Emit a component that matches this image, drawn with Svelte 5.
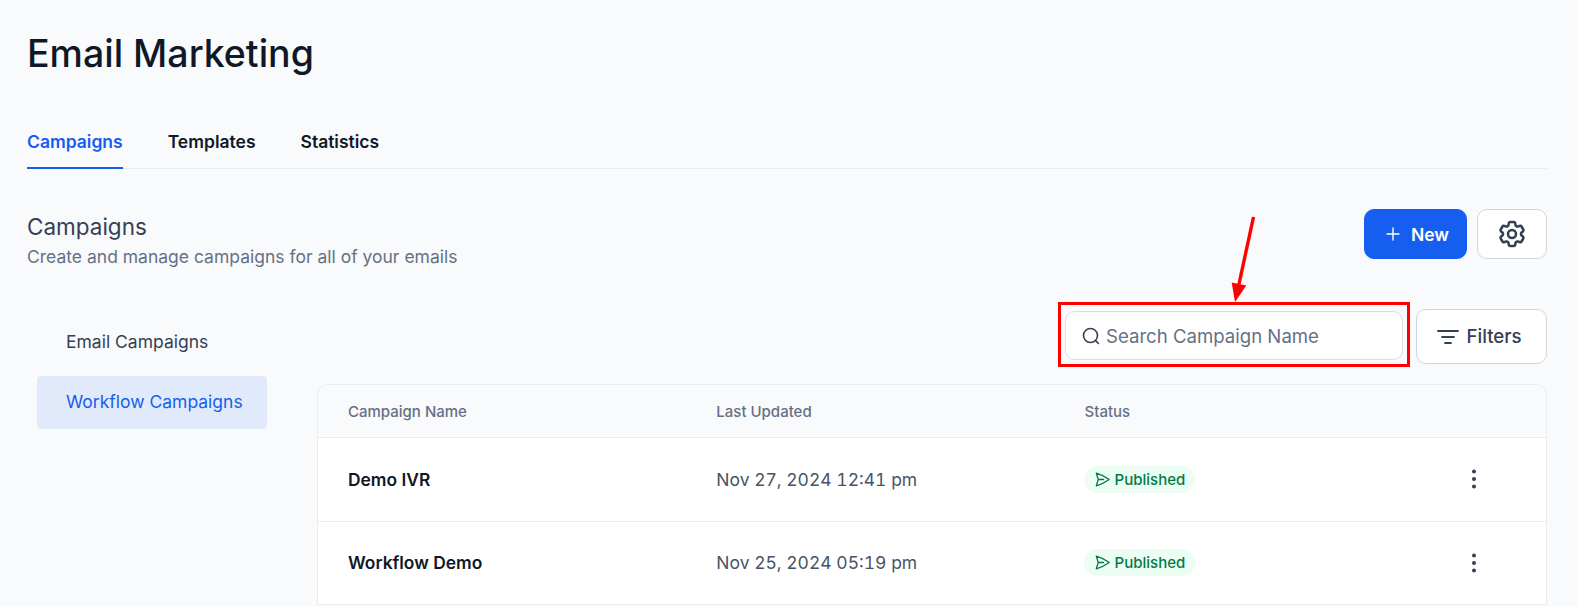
<script lang="ts">
	const tabs = ['Campaigns', 'Templates', 'Statistics']
	const rows = [
		{ name: 'Demo IVR', updated: 'Nov 27, 2024 12:41 pm' },
		{ name: 'Workflow Demo', updated: 'Nov 25, 2024 05:19 pm' },
	]
</script>

<div class="page">
	<h1>Email Marketing</h1>

	<nav class="tabs">
		{#each tabs as tab, i}
			<span class="tab" class:active={i === 0}>{tab}</span>
		{/each}
	</nav>

	<header class="section-head">
		<div>
			<h2>Campaigns</h2>
			<p>Create and manage campaigns for all of your emails</p>
		</div>
		<div class="actions">
			<button class="btn-new">
				<svg width="14" height="14" viewBox="0 0 14 14" fill="none" stroke="currentColor" stroke-width="1.4" stroke-linecap="round">
					<path d="M7 1v12M1 7h12" />
				</svg>
				New
			</button>
			<button class="btn-gear" aria-label="Settings">
				<svg width="32" height="32" viewBox="0 0 24 24" fill="none" stroke="#344054" stroke-width="1.9" stroke-linecap="round" stroke-linejoin="round">
					<path d="M9.594 3.94c.09-.542.56-.94 1.11-.94h2.593c.55 0 1.02.398 1.11.94l.213 1.281c.063.374.313.686.645.87.074.04.147.083.22.127.325.196.72.257 1.075.124l1.217-.456a1.125 1.125 0 0 1 1.37.49l1.296 2.247a1.125 1.125 0 0 1-.26 1.431l-1.003.827c-.293.241-.438.613-.43.992a7.723 7.723 0 0 1 0 .255c-.008.378.137.75.43.991l1.004.827c.424.35.534.955.26 1.43l-1.298 2.247a1.125 1.125 0 0 1-1.369.491l-1.217-.456c-.355-.133-.75-.072-1.076.124a6.47 6.47 0 0 1-.22.128c-.331.183-.581.495-.644.869l-.213 1.281c-.09.543-.56.94-1.11.94h-2.594c-.55 0-1.019-.398-1.11-.94l-.213-1.281c-.062-.374-.312-.686-.644-.87a6.52 6.52 0 0 1-.22-.127c-.325-.196-.72-.257-1.076-.124l-1.217.456a1.125 1.125 0 0 1-1.369-.49l-1.297-2.247a1.125 1.125 0 0 1 .26-1.431l1.004-.827c.292-.24.437-.613.43-.991a6.932 6.932 0 0 1 0-.255c.007-.38-.138-.751-.43-.992l-1.004-.827a1.125 1.125 0 0 1-.26-1.43l1.297-2.247a1.125 1.125 0 0 1 1.37-.491l1.216.456c.356.133.751.072 1.076-.124.072-.044.146-.086.22-.128.332-.183.582-.495.644-.869l.214-1.28Z" />
					<circle cx="12" cy="12" r="3" />
				</svg>
			</button>
		</div>
	</header>

	<div class="content">
		<aside class="side">
			<div class="side-item">Email Campaigns</div>
			<div class="side-item current">Workflow Campaigns</div>
		</aside>

		<main class="main">
			<div class="toolbar">
				<div class="search">
					<svg width="18" height="18" viewBox="0 0 18 18" fill="none" stroke="#344054" stroke-width="1.6" stroke-linecap="round">
						<circle cx="8.5" cy="8.5" r="7" />
						<path d="M13.6 13.6 16.5 16.5" />
					</svg>
					<span>Search Campaign Name</span>
				</div>
				<button class="btn-filters">
					<svg width="22" height="16" viewBox="0 0 22 16" fill="none" stroke="#344054" stroke-width="1.8" stroke-linecap="round">
						<path d="M1 2h20M5 8h12M8 14h6" />
					</svg>
					Filters
				</button>
			</div>

			<div class="table">
				<div class="row head">
					<span>Campaign Name</span>
					<span>Last Updated</span>
					<span>Status</span>
				</div>
				{#each rows as row}
					<div class="row">
						<span class="name">{row.name}</span>
						<span class="date">{row.updated}</span>
						<span>
							<span class="badge">
								<svg width="17" height="17" viewBox="0 0 24 24" fill="none" stroke="currentColor" stroke-width="1.8" stroke-linecap="round" stroke-linejoin="round">
									<path d="M6 12 3.269 3.125A59.769 59.769 0 0 1 21.485 12 59.768 59.768 0 0 1 3.27 20.875L5.999 12Zm0 0h7.5" />
								</svg>
								Published
							</span>
						</span>
						<svg class="kebab" width="6" height="20" viewBox="0 0 6 20" fill="#344054">
							<circle cx="3" cy="2.5" r="2" />
							<circle cx="3" cy="10" r="2" />
							<circle cx="3" cy="17.5" r="2" />
						</svg>
					</div>
				{/each}
			</div>
		</main>
	</div>

	<!-- annotation drawn over the screenshot -->
	<div class="callout"></div>
	<svg class="arrow" width="32" height="92" viewBox="0 0 32 92" fill="#ff0000">
		<path d="M28.5 3 14 70" stroke="#ff0000" stroke-width="3.4" />
		<path d="M6.7 68.4 21.3 71.6 10 88Z" />
	</svg>
</div>

<style>
	:global(body) {
		background: #f9fafc;
		overflow: hidden;
	}

	.page {
		position: relative;
		height: 607px;
		overflow: hidden;
		box-sizing: border-box;
		padding: 27px 31px 0 27px;
		font-family: Inter, 'Liberation Sans', sans-serif;
		color: #101828;
	}

	h1 {
		margin: 0;
		font-size: 37.5px;
		line-height: 54px;
		font-weight: 500;
		color: #101828;
	}

	.tabs {
		display: flex;
		gap: 45px;
		margin-top: 48px;
		border-bottom: 1px solid #eaecf0;
	}

	.tab {
		padding-bottom: 12px;
		margin-bottom: -1px;
		font-size: 17.5px;
		line-height: 26px;
		font-weight: 600;
		border-bottom: 2px solid transparent;
	}

	.tab.active {
		color: #155eef;
		border-bottom-color: #155eef;
	}

	.section-head {
		display: flex;
		justify-content: space-between;
		align-items: flex-start;
		margin-top: 40px;
	}

	h2 {
		margin: 4px 0 0;
		font-size: 22.5px;
		line-height: 28px;
		font-weight: 400;
		color: #344054;
	}

	.section-head p {
		margin: 4px 0 0;
		font-size: 17.5px;
		line-height: 24px;
		color: #667085;
	}

	.actions {
		display: flex;
		gap: 10px;
	}

	button {
		font-family: inherit;
		display: flex;
		align-items: center;
		justify-content: center;
		box-sizing: border-box;
		cursor: pointer;
	}

	.btn-new {
		width: 103px;
		height: 50px;
		gap: 11px;
		padding: 0 0 0 4px;
		background: #155eef;
		color: #fff;
		border: 1px solid #155eef;
		border-radius: 10px;
		font-size: 17.5px;
		font-weight: 600;
	}

	.btn-gear {
		width: 70px;
		height: 50px;
		background: #fff;
		border: 1px solid #d0d5dd;
		border-radius: 10px;
	}

	.content {
		display: flex;
		margin-top: 40px;
	}

	.side {
		width: 230px;
		margin: 0 50px 0 10px;
		padding-top: 6px;
		flex: none;
		display: flex;
		flex-direction: column;
		gap: 9px;
	}

	.side-item {
		height: 52px;
		padding-left: 29px;
		display: flex;
		align-items: center;
		border-radius: 4px;
		font-size: 17.5px;
		color: #344054;
	}

	.side-item.current {
		height: 53px;
		box-sizing: border-box;
		padding-bottom: 3px;
		background: #e1eafa;
		color: #155eef;
	}

	.main {
		flex: 1;
		min-width: 0;
	}

	.toolbar {
		display: flex;
		justify-content: flex-end;
		align-items: center;
		gap: 13px;
	}

	.search {
		width: 338px;
		height: 49px;
		margin-bottom: 2px;
		box-sizing: border-box;
		display: flex;
		align-items: center;
		gap: 6px;
		padding-left: 16px;
		background: #fff;
		border: 1px solid #d9dde5;
		border-radius: 10px;
		font-size: 18.6px;
		color: #667085;
	}

	.btn-filters {
		width: 131px;
		height: 55px;
		gap: 7px;
		padding: 0 4px 0 0;
		background: #fff;
		border: 1px solid #d0d5dd;
		border-radius: 10px;
		font-size: 18.7px;
		font-weight: 500;
		color: #344054;
	}

	.table {
		margin-top: 20px;
		background: #fff;
		border: 1px solid #eaecf0;
		border-bottom: 0;
		border-radius: 12px 12px 0 0;
		overflow: hidden;
	}

	.row {
		display: grid;
		grid-template-columns: 368.3px 368.3px 1fr 6px;
		align-items: center;
		height: 83.5px;
		box-sizing: border-box;
		padding: 0 69px 0 30px;
		border-bottom: 1px solid #eaecf0;
	}

	.row.head {
		height: 53px;
		background: #f9fafb;
		font-size: 15px;
		font-weight: 500;
		color: #667085;
	}

	.name {
		font-size: 17.4px;
		font-weight: 600;
		color: #101828;
	}

	.date {
		font-size: 17.5px;
		font-variant-numeric: tabular-nums;
		color: #475467;
	}

	.badge {
		display: inline-flex;
		align-items: center;
		gap: 4px;
		height: 27px;
		margin-left: -1px;
		padding: 0 10px;
		border-radius: 14px;
		background: #ecfdf3;
		color: #027a48;
		font-size: 15px;
		font-weight: 500;
	}

	.callout {
		position: absolute;
		left: 1058px;
		top: 302px;
		width: 352px;
		height: 65px;
		box-sizing: border-box;
		border: 3px solid #ff0000;
	}

	.arrow {
		position: absolute;
		left: 1225px;
		top: 214px;
	}
</style>
